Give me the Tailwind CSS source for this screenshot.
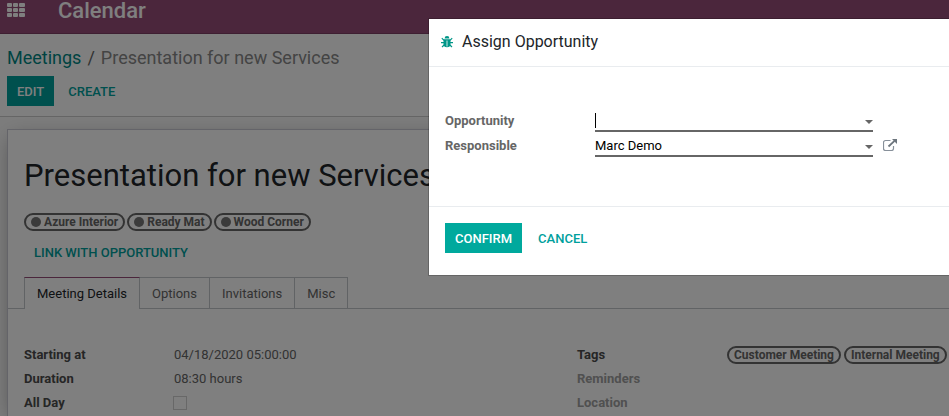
<!DOCTYPE html>
<html lang="en">
<head>
<meta charset="utf-8">
<meta name="viewport" content="width=device-width, initial-scale=1">
<title>Calendar</title>
<script src="https://cdn.jsdelivr.net/npm/@tailwindcss/browser@4"></script>
</head>
<body class="relative flex min-h-screen flex-col overflow-x-hidden bg-white font-[Roboto,sans-serif] text-[13px] leading-5 text-[#666666]">
<header class="flex h-[34px] items-start border-b border-[#7c3f65] bg-[#964c78] pl-[7px] text-white">
  <button type="button" aria-label="Applications" class="mt-[3px] h-[14px] w-[18px]">
    <svg viewBox="0 0 18 14" class="h-[14px] w-[18px]" fill="currentColor" aria-hidden="true">
      <rect x="0" y="0" width="5" height="4" rx="1"/><rect x="6" y="0" width="5" height="4" rx="1"/><rect x="12" y="0" width="6" height="4" rx="1"/>
      <rect x="0" y="5" width="5" height="4" rx="1"/><rect x="6" y="5" width="5" height="4" rx="1"/><rect x="12" y="5" width="6" height="4" rx="1"/>
      <rect x="0" y="10" width="5" height="4" rx="1"/><rect x="6" y="10" width="5" height="4" rx="1"/><rect x="12" y="10" width="6" height="4" rx="1"/>
    </svg>
  </button>
  <a href="#" class="ml-[33px] text-[22px] leading-[22px] font-medium">Calendar</a>
</header>

<section class="border-b border-[#cccccc] px-[7px] pt-3 pb-[10px]">
  <nav aria-label="Breadcrumb" class="mb-[6px] flex gap-[6px] text-[18px] leading-6">
    <a href="#" class="text-[#008784]">Meetings</a>
    <span class="text-[#666666]">/</span>
    <span class="text-[#888888]">Presentation for new Services</span>
  </nav>
  <div class="flex gap-1 font-medium">
    <button type="button" class="h-[30px] bg-[#00a09d] px-[10px] pt-[2px] text-white">EDIT</button>
    <button type="button" class="h-[30px] px-[10px] pt-[2px] text-[#00a09d]">CREATE</button>
  </div>
</section>

<main class="flex flex-1 flex-col bg-[#f9f9f9] pt-3 pl-[7px]">
  <article class="flex-1 border-t border-l border-[#c8c8d3] bg-white shadow-[0_5px_20px_-5px_rgba(0,0,0,0.4)]">
    <div class="px-4">
      <h1 class="pt-[26px] text-[31px] leading-10 whitespace-nowrap text-[#212529]">Presentation for new Services</h1>
      <ul class="mt-[17px] flex gap-[2px] text-[12px] leading-[14px] font-bold">
        <li class="flex items-center gap-[3px] rounded-full border-2 border-[#666666] px-[5px]"><span class="size-[10px] rounded-full bg-[#777777]"></span>Azure Interior</li>
        <li class="flex items-center gap-[3px] rounded-full border-2 border-[#666666] px-[5px]"><span class="size-[10px] rounded-full bg-[#777777]"></span>Ready Mat</li>
        <li class="flex items-center gap-[3px] rounded-full border-2 border-[#666666] px-[5px]"><span class="size-[10px] rounded-full bg-[#777777]"></span>Wood Corner</li>
      </ul>
      <button type="button" class="mt-[7px] h-[30px] px-[10px] font-medium text-[#00a09d]">LINK WITH OPPORTUNITY</button>
    </div>
    <div role="tablist" class="mt-[9px] flex items-end border-b border-[#c3c6cb] pl-4">
      <button type="button" role="tab" aria-selected="true" class="-mb-px h-8 border-x border-t border-x-[#c3c6cb] border-t-[#964c78] bg-white px-3 text-[#212529]">Meeting Details</button>
      <button type="button" role="tab" aria-selected="false" class="-mb-px h-8 border-t border-r border-[#c3c6cb] px-3">Options</button>
      <button type="button" role="tab" aria-selected="false" class="-mb-px h-8 border-t border-r border-[#c3c6cb] px-3">Invitations</button>
      <button type="button" role="tab" aria-selected="false" class="-mb-px h-8 border-t border-r border-[#c3c6cb] px-3">Misc</button>
    </div>
    <div class="grid grid-cols-[553px_1fr] pt-[34px] pl-4">
      <div class="grid auto-rows-[24px] grid-cols-[150px_1fr] items-center">
        <span class="font-bold text-[#4c4c4c]">Starting at</span><span>04/18/2020 05:00:00</span>
        <span class="font-bold text-[#4c4c4c]">Duration</span><span>08:30 hours</span>
        <label for="allday" class="font-bold text-[#4c4c4c]">All Day</label>
        <input id="allday" type="checkbox" disabled class="-ml-px size-[14px] appearance-none border border-[#d0d0d0]">
      </div>
      <div class="grid auto-rows-[24px] grid-cols-[150px_1fr] items-center font-bold">
        <span class="text-[#4c4c4c]">Tags</span>
        <ul class="flex gap-[3px] text-[12px] leading-[14px] whitespace-nowrap">
          <li class="rounded-full border-2 border-[#666666] px-[5px]">Customer Meeting</li>
          <li class="rounded-full border-2 border-[#666666] px-[5px]">Internal Meeting</li>
        </ul>
        <span class="col-span-2 text-[#a0a0a0]">Reminders</span>
        <span class="col-span-2 text-[#a0a0a0]">Location</span>
      </div>
    </div>
  </article>
</main>

<div class="absolute inset-0 bg-black/50 pt-[19px] pl-[429px]">
  <section role="dialog" aria-modal="true" aria-labelledby="dialog-title" class="bg-white shadow-[0_0_0_1px_rgba(0,0,0,0.2)]">
    <header class="flex items-center gap-[9px] border-b border-[#e9ecef] px-3 pt-[11px] pb-3">
      <svg viewBox="0 0 12 12" class="size-3" aria-hidden="true">
        <path d="M3.600 2.500a2.400 2.400 0 0 1 4.800 0zM2.500 3.200h7v4.800a3.500 3.300 0 0 1-7 0z" fill="#009688"/>
        <path d="M.8 2.200 3 4.400M11.200 2.200 9 4.400M0 6.600h3M12 6.600H9M1 11l2.400-2.300M11 11 8.600 8.700" stroke="#009688" stroke-width="1.200" fill="none"/>
        <path d="M6 4.500v6" stroke="#ffffff" stroke-width="0.800"/>
      </svg>
      <h2 id="dialog-title" class="text-[16px] leading-6 text-[#212529]">Assign Opportunity</h2>
    </header>
    <form>
      <div class="grid grid-cols-[150px_278px_1fr] gap-y-[5px] px-4 pt-[45px] pb-[49px]">
        <label for="opportunity" class="font-bold leading-[18px]">Opportunity</label>
        <div class="relative flex h-5 border-b-2 border-[#666666]">
          <input id="opportunity" type="text" class="w-full text-black outline-none">
          <span class="absolute top-px left-0 h-[15px] w-px bg-black"></span>
          <svg viewBox="0 0 8 4" class="absolute right-0 bottom-[6px] h-1 w-2" aria-hidden="true"><path d="M0 0h8L4 4z" fill="#666666"/></svg>
        </div>
        <span></span>
        <label for="responsible" class="font-bold leading-[18px]">Responsible</label>
        <div class="relative flex h-5 border-b-2 border-[#666666]">
          <input id="responsible" type="text" value="Marc Demo" class="w-full text-black outline-none">
          <svg viewBox="0 0 8 4" class="absolute right-0 bottom-[6px] h-1 w-2" aria-hidden="true"><path d="M0 0h8L4 4z" fill="#666666"/></svg>
        </div>
        <button type="button" aria-label="External link" class="mt-[2px] ml-[10px] h-3 w-[14px]">
          <svg viewBox="0 0 14 12" class="h-3 w-[14px]" aria-hidden="true">
            <path d="M7.500 1.500H2.500a2 2 0 0 0-2 2v6a2 2 0 0 0 2 2h6a2 2 0 0 0 2-2V7" fill="none" stroke="#87909a" stroke-width="1.200"/>
            <path d="M5.500 7.500 11.500 1.800" stroke="#6c757d" stroke-width="1.800"/>
            <path d="M9 0h5v5z" fill="#6c757d"/>
          </svg>
        </button>
      </div>
      <footer class="flex gap-[6px] border-t border-[#e9ecef] px-4 pt-4 pb-[22px] font-medium">
        <button type="button" class="h-[30px] bg-[#00a99d] px-[10px] pt-[2px] text-white">CONFIRM</button>
        <button type="button" class="h-[30px] px-[10px] pt-[2px] text-[#00a09d]">CANCEL</button>
      </footer>
    </form>
  </section>
</div>
</body>
</html>
